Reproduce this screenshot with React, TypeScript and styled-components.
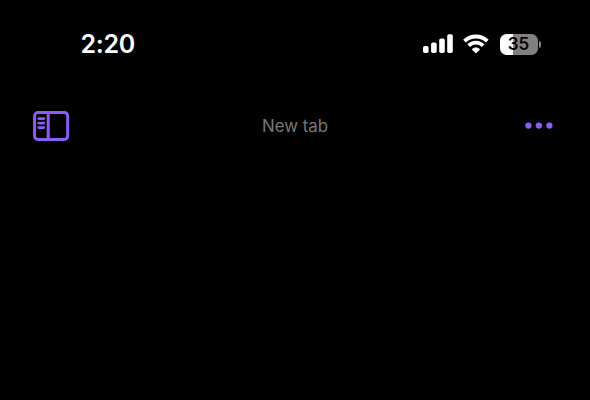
import React from "react";
import styled, { createGlobalStyle } from "styled-components";

const GlobalStyle = createGlobalStyle`
  * { box-sizing: border-box; }
  body { margin: 0; background: #000; overflow: hidden; }
`;

const Screen = styled.main`
  width: 590px;
  height: 400px;
  background: #000;
  font-family: Inter, "Liberation Sans", sans-serif;
  display: flex;
  flex-direction: column;
`;

const StatusBar = styled.header`
  height: 88px;
  padding: 0 49px 0 80.5px;
  display: flex;
  align-items: center;
  justify-content: space-between;
`;

const Clock = styled.time`
  color: #fff;
  font-size: 25px;
  font-weight: 600;
  line-height: 30px;
  letter-spacing: -0.3px;
`;

const Indicators = styled.div`
  display: flex;
  align-items: center;
  gap: 10px;
`;

const Battery = styled.div`
  display: flex;
  align-items: center;
  gap: 1px;
`;

const BatteryBody = styled.div<{ $level: number }>`
  width: 38px;
  height: 21px;
  padding-right: 1px;
  border-radius: 6.5px;
  display: flex;
  align-items: center;
  justify-content: center;
  background: linear-gradient(
    to right,
    #fff ${({ $level }) => $level}%,
    #808080 ${({ $level }) => $level}%
  );
  color: #000;
  font-size: 17px;
  font-weight: 600;
  line-height: 21px;
`;

const BatteryTip = styled.span`
  width: 2px;
  height: 7px;
  border-radius: 0 2px 2px 0;
  background: #808080;
`;

const Toolbar = styled.nav`
  height: 76px;
  padding: 0 33px;
  display: grid;
  grid-template-columns: 40px 1fr 40px;
  align-items: center;
`;

const Title = styled.h1`
  margin: 0;
  text-align: center;
  color: #777;
  font-size: 16.8px;
  font-weight: 400;
  line-height: 22px;
`;

const IconButton = styled.button<{ $end?: boolean }>`
  padding: 0;
  border: 0;
  background: none;
  color: #8b5df5;
  display: flex;
  justify-content: ${({ $end }) => ($end ? "flex-end" : "flex-start")};
`;

const SignalIcon = () => (
  <svg width="30" height="20" viewBox="0 0 30 20" fill="#fff">
    <rect x="0" y="12" width="5.6" height="7" rx="1.8" />
    <rect x="8.1" y="8.5" width="5.6" height="10.5" rx="1.8" />
    <rect x="16.2" y="4.5" width="5.6" height="14.5" rx="1.8" />
    <rect x="24.2" y="0.3" width="5.6" height="18.7" rx="1.8" />
  </svg>
);

const WifiIcon = () => (
  <svg width="27" height="20" viewBox="0 0 27 20" fill="none" stroke="#fff">
    <path d="M1.5 7.2A16.2 16.2 0 0 1 24.3 7.2" strokeWidth="3.9" />
    <path d="M5.7 11.6A10.2 10.2 0 0 1 20.1 11.6" strokeWidth="3.8" />
    <path
      d="M12.9 19L9.1 15.4A5.4 5.4 0 0 1 16.7 15.4Z"
      fill="#fff"
      strokeWidth="0.8"
      strokeLinejoin="round"
    />
  </svg>
);

const SidebarIcon = () => (
  <svg width="37" height="30" viewBox="0 0 37 30" fill="none" stroke="currentColor">
    <rect x="1.6" y="1.5" width="33.1" height="27" rx="3.4" strokeWidth="3" />
    <path d="M15.2 1.5V28.5" strokeWidth="3" />
    <path d="M5.7 7.6H10.8M5.7 12.1H10.8M5.7 16.6H10.8" strokeWidth="2.8" strokeLinecap="round" />
  </svg>
);

const MoreIcon = () => (
  <svg width="32" height="8" viewBox="0 0 32 8" fill="currentColor">
    <circle cx="3.4" cy="3.6" r="3.15" />
    <circle cx="13.9" cy="3.6" r="3.15" />
    <circle cx="24.4" cy="3.6" r="3.15" />
  </svg>
);

export default function App() {
  return (
    <>
      <GlobalStyle />
      <Screen>
        <StatusBar>
          <Clock>2:20</Clock>
          <Indicators>
            <SignalIcon />
            <WifiIcon />
            <Battery>
              <BatteryBody $level={35}>35</BatteryBody>
              <BatteryTip />
            </Battery>
          </Indicators>
        </StatusBar>
        <Toolbar>
          <IconButton aria-label="Show sidebar">
            <SidebarIcon />
          </IconButton>
          <Title>New tab</Title>
          <IconButton $end aria-label="More options">
            <MoreIcon />
          </IconButton>
        </Toolbar>
      </Screen>
    </>
  );
}
